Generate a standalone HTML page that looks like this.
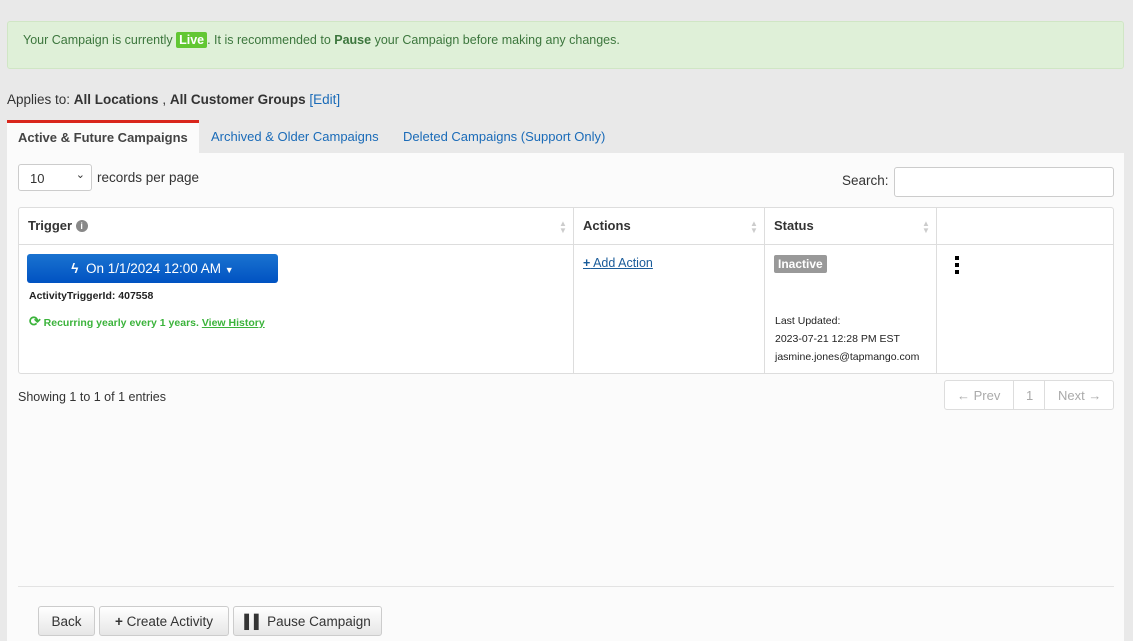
<!DOCTYPE html>
<html><head><style>
*{box-sizing:border-box}
body{margin:0;width:1133px;height:641px;overflow:hidden;background:#e9e9e9;font-family:"Liberation Sans",sans-serif;font-size:13px;color:#333;position:relative}
.abs{position:absolute;white-space:nowrap}
.alert{left:7px;top:21px;width:1117px;height:48px;background:#dff0d8;border:1px solid #d0e6c5;border-radius:3px;color:#3c763d;font-size:12.5px;padding:11px 15px}
.live{background:#62c733;color:#fff;font-weight:bold;padding:1px 3px;border-radius:2px}
a{color:#1a6bb8;text-decoration:none}
.panel{left:7px;top:153px;width:1117px;height:488px;background:#fbfbfb}
.tab{top:120px;height:34px;padding:9px 11px;font-size:13px}
.t{left:18px;top:207px;width:1096px;height:167px;border:1px solid #ddd;border-radius:3px;background:#fff}
.col{position:absolute;top:0;bottom:0;border-left:1px solid #ddd}
.hdr{position:absolute;left:0;right:0;top:36px;border-top:1px solid #ddd}
.th{position:absolute;top:10px;font-weight:bold;font-size:13px}
.sort{position:absolute;top:12px;color:#ccc;font-size:8px;line-height:7px}
.btn{top:606px;height:30px;background:linear-gradient(#fff,#e6e6e6);border:1px solid #ccc;border-radius:3px;font-size:13.5px;padding:7px 0;text-align:center;color:#333}
</style></head><body>
<div class="abs alert">Your Campaign is currently <span class="live">Live</span>. It is recommended to <b>Pause</b> your Campaign before making any changes.</div>
<div class="abs" style="left:7px;top:92px;font-size:13.5px">Applies to: <b>All Locations</b> , <b>All Customer Groups</b> <a>[Edit]</a></div>
<div class="abs panel"></div>
<div class="abs tab" style="left:7px;width:192px;background:#fbfbfb;border-top:3px solid #d9261c;padding-top:7px;font-weight:bold;color:#444">Active &amp; Future Campaigns</div>
<div class="abs tab" style="left:200px;color:#1a6bb8">Archived &amp; Older Campaigns</div>
<div class="abs tab" style="left:392px;color:#1a6bb8">Deleted Campaigns (Support Only)</div>
<div class="abs" style="left:18px;top:164px;width:74px;height:27px;border:1px solid #ccc;border-radius:3px;background:#fff;padding:6px 11px;font-size:13px">10<span style="position:absolute;right:6px;top:3px;font-size:11px">&#8964;</span></div>
<div class="abs" style="left:97px;top:170px;font-size:13.5px">records per page</div>
<div class="abs" style="left:842px;top:173px;font-size:13.5px">Search:</div>
<div class="abs" style="left:894px;top:167px;width:220px;height:30px;border:1px solid #ccc;border-radius:3px;background:#fff"></div>
<div class="abs t">
<div class="hdr"></div>
<div class="col" style="left:554px"></div><div class="col" style="left:745px"></div><div class="col" style="left:917px"></div>
<div class="th" style="left:9px">Trigger <span style="display:inline-block;width:12px;height:12px;border-radius:50%;background:#888;color:#fff;font-size:9px;text-align:center;line-height:12px;vertical-align:1px">i</span></div>
<div class="th" style="left:564px">Actions</div>
<div class="th" style="left:755px">Status</div>
<div class="sort" style="left:540px">▲<br>▼</div><div class="sort" style="left:731px">▲<br>▼</div><div class="sort" style="left:903px">▲<br>▼</div>
<div class="abs" style="left:8px;top:46px;width:251px;height:29px;background:linear-gradient(#1a73d0,#0052c2);border-radius:3px;color:#fff;font-size:13.5px;text-align:center;line-height:29px"><b>ϟ</b>&nbsp; On 1/1/2024 12:00 AM <span style="font-size:9px">▼</span></div>
<div class="abs" style="left:10px;top:82px;font-size:10.5px;font-weight:bold;color:#222">ActivityTriggerId: 407558</div>
<div class="abs" style="left:10px;top:105px;font-size:10.5px;font-weight:bold;color:#3bb33b"><span style="font-size:14px">⟳</span> Recurring yearly every 1 years. <u>View History</u></div>
<div class="abs" style="left:564px;top:48px;font-size:12.5px;color:#1a5c9a;text-decoration:underline"><b>+</b> Add Action</div>
<div class="abs" style="left:755px;top:47px;background:#999;color:#fff;font-weight:bold;font-size:12px;padding:2px 4px;border-radius:2px">Inactive</div>
<div class="abs" style="left:756px;top:104px;font-size:10.5px;line-height:18px;color:#222">Last Updated:<br>2023-07-21 12:28 PM EST<br>jasmine.jones@tapmango.com</div>
<div class="abs" style="left:936px;top:48px;width:4px"><div style="width:4px;height:4px;background:#000;margin-bottom:3px"></div><div style="width:4px;height:4px;background:#000;margin-bottom:3px"></div><div style="width:4px;height:4px;background:#000"></div></div>
</div>
<div class="abs" style="left:18px;top:390px;font-size:12.5px">Showing 1 to 1 of 1 entries</div>
<div class="abs" style="left:944px;top:380px;width:170px;height:30px;border:1px solid #ddd;border-radius:3px;background:#fff;color:#aaa;font-size:13px">
<span class="abs" style="left:12px;top:7px">← Prev</span><span class="abs" style="left:68px;top:0;height:28px;border-left:1px solid #ddd"></span><span class="abs" style="left:81px;top:7px">1</span><span class="abs" style="left:99px;top:0;height:28px;border-left:1px solid #ddd"></span><span class="abs" style="left:113px;top:7px">Next →</span></div>
<div class="abs" style="left:18px;top:586px;width:1096px;border-top:1px solid #e3e3e3"></div>
<div class="abs btn" style="left:38px;width:57px">Back</div>
<div class="abs btn" style="left:99px;width:130px"><b>+</b> Create Activity</div>
<div class="abs btn" style="left:233px;width:149px"><b>▌▌</b> Pause Campaign</div>
</body></html>
